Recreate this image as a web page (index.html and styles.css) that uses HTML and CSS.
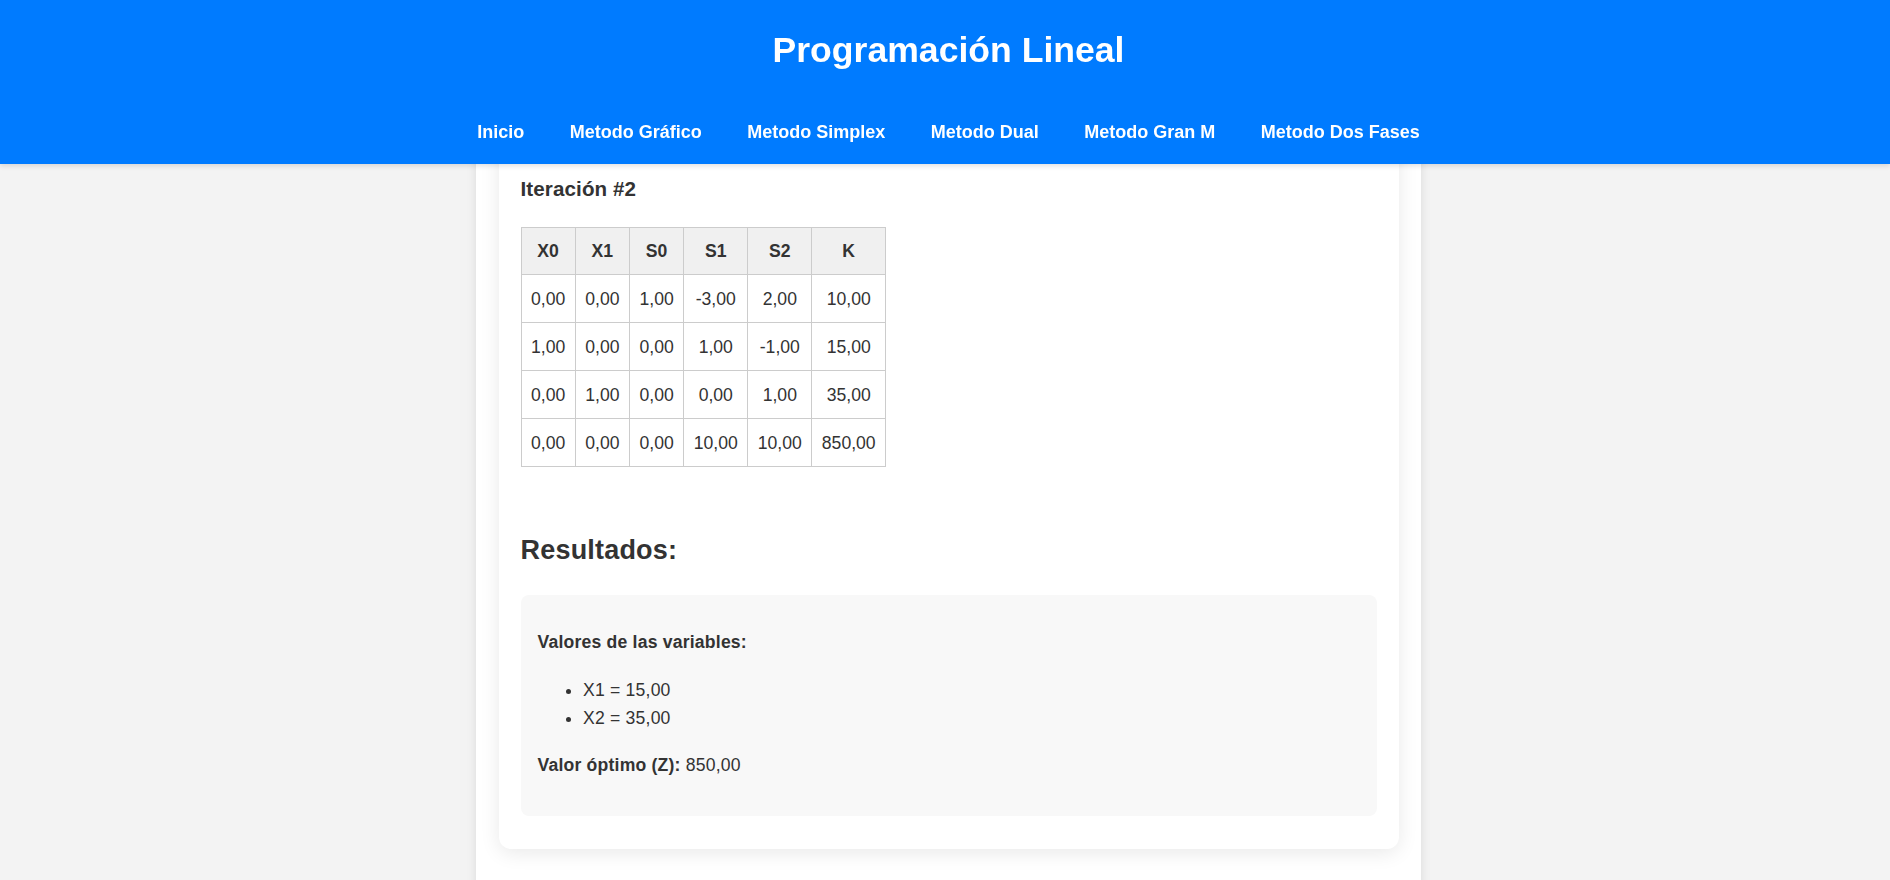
FILE: index.html
```html
<!DOCTYPE html>
<html lang="es">
<head>
<meta charset="utf-8">
<title>Programación Lineal</title>
<link rel="stylesheet" href="styles.css">
</head>
<body>
<header class="site-header">
  <div class="header-inner">
    <h1 class="site-title">Programación Lineal</h1>
    <nav class="main-nav">
      <a href="#" class="nav-link">Inicio</a>
      <a href="#" class="nav-link">Metodo Gráfico</a>
      <a href="#" class="nav-link">Metodo Simplex</a>
      <a href="#" class="nav-link">Metodo Dual</a>
      <a href="#" class="nav-link">Metodo Gran M</a>
      <a href="#" class="nav-link">Metodo Dos Fases</a>
    </nav>
  </div>
</header>

<main class="container">
  <section class="card">
    <h3 class="iter-title">Iteración #2</h3>
    <table class="tableau">
      <thead>
        <tr><th>X0</th><th>X1</th><th>S0</th><th>S1</th><th>S2</th><th>K</th></tr>
      </thead>
      <tbody>
        <tr><td>0,00</td><td>0,00</td><td>1,00</td><td>-3,00</td><td>2,00</td><td>10,00</td></tr>
        <tr><td>1,00</td><td>0,00</td><td>0,00</td><td>1,00</td><td>-1,00</td><td>15,00</td></tr>
        <tr><td>0,00</td><td>1,00</td><td>0,00</td><td>0,00</td><td>1,00</td><td>35,00</td></tr>
        <tr><td>0,00</td><td>0,00</td><td>0,00</td><td>10,00</td><td>10,00</td><td>850,00</td></tr>
      </tbody>
    </table>

    <h2 class="results-title">Resultados:</h2>
    <div class="results-box">
      <p class="results-label"><strong>Valores de las variables:</strong></p>
      <ul class="var-list">
        <li>X1 = 15,00</li>
        <li>X2 = 35,00</li>
      </ul>
      <p class="results-optimum"><strong>Valor óptimo (Z):</strong> 850,00</p>
    </div>
  </section>
</main>
</body>
</html>
```

FILE: styles.css
```css
* {
  box-sizing: border-box;
}

body {
  margin: 0;
  padding-left: 7px;
  background: #f3f3f3;
  font-family: "Liberation Sans", Arial, sans-serif;
  color: #333;
  font-size: 17.6px;
}

.site-header {
  position: fixed;
  top: 0;
  left: 0;
  right: 0;
  height: 164px;
  background: #007bff;
  color: #fff;
  z-index: 10;
  box-shadow: 0 2px 5px rgba(0, 0, 0, 0.12);
}

.header-inner {
  padding: 29.9px 0 0 7px;
  text-align: center;
}

.site-title {
  margin: 0;
  font-size: 35.6px;
  line-height: 41px;
  font-weight: bold;
}

.main-nav {
  margin-top: 50.7px;
  display: flex;
  justify-content: center;
  gap: 45.5px;
}

.nav-link {
  color: #fff;
  text-decoration: none;
  font-weight: bold;
  font-size: 18px;
  line-height: 21px;
}

.container {
  width: 945px;
  margin: 0 auto;
  background: #fff;
  min-height: 900px;
  padding: 100px 22.5px 40px;
  box-shadow: 0 0 10px rgba(0, 0, 0, 0.1);
}

.card {
  background: #fff;
  border-radius: 12px;
  padding: 22px 22px 33px;
  box-shadow: 0 4px 20px rgba(0, 0, 0, 0.09);
}

.iter-title {
  margin: 54.9px 0 26.4px;
  font-size: 20.6px;
  line-height: 24px;
  font-weight: bold;
  letter-spacing: 0.1px;
}

.tableau {
  border-collapse: collapse;
}

.tableau th,
.tableau td {
  border: 1px solid #ccc;
  text-align: center;
  font-size: 17.6px;
  line-height: 20px;
}

.tableau th {
  background: #f0f0f0;
  font-weight: bold;
  padding: 13px 9.5px;
}

.tableau td {
  padding: 13.5px 9.5px;
}

.results-title {
  margin: 68.2px 0 29.4px;
  font-size: 27px;
  line-height: 30px;
  font-weight: bold;
  letter-spacing: 0.2px;
}

.results-box {
  background: #f8f8f8;
  border-radius: 8px;
  padding: 16px 17px 19px;
  line-height: 28.16px;
  letter-spacing: 0.2px;
}

.results-label {
  margin: 17px 0 0;
}

.var-list {
  margin: 19.5px 0 19px;
  padding-left: 45.5px;
}

.results-optimum {
  margin: 0 0 17.6px;
}
```
